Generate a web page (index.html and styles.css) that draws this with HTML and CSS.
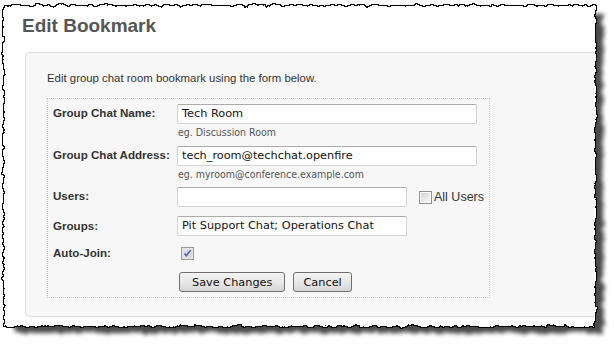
FILE: index.html
```html
<!DOCTYPE html>
<html lang="en">
<head>
    <meta charset="UTF-8">
    <title>Edit Bookmark</title>
    <link rel="stylesheet" href="styles.css">
</head>
<body>
    <div class="sheet">
        <!-- torn paper edge and drop shadow behind the page -->
        <svg class="paper" width="614" height="349" viewBox="0 0 614 349">
            <defs>
                <filter id="torn" x="-3%" y="-3%" width="106%" height="106%" color-interpolation-filters="sRGB">
                    <feTurbulence type="fractalNoise" baseFrequency="0.14" numOctaves="3" seed="7" result="noise"/>
                    <feDisplacementMap in="SourceGraphic" in2="noise" scale="6" xChannelSelector="R" yChannelSelector="G" result="paper"/>
                    <feMorphology in="paper" operator="dilate" radius="1" result="thick"/>
                    <feFlood flood-color="#000"/>
                    <feComposite in2="thick" operator="in" result="edge"/>
                    <feMerge>
                        <feMergeNode in="edge"/>
                        <feMergeNode in="paper"/>
                    </feMerge>
                </filter>
                <filter id="shadow" x="-5%" y="-5%" width="110%" height="110%" color-interpolation-filters="sRGB">
                    <feTurbulence type="fractalNoise" baseFrequency="0.14" numOctaves="3" seed="7" result="noise"/>
                    <feDisplacementMap in="SourceGraphic" in2="noise" scale="6" xChannelSelector="R" yChannelSelector="G"/>
                    <feGaussianBlur stdDeviation="2.2"/>
                </filter>
            </defs>
            <rect x="14" y="14" width="589" height="319" fill="#4a4a4a" filter="url(#shadow)"/>
            <rect x="4" y="6" width="591" height="320" fill="#fff" filter="url(#torn)"/>
        </svg>

        <div class="page">
            <h1>Edit Bookmark</h1>

            <div class="panel">
                <p class="intro">Edit group chat room bookmark using the form below.</p>

                <div class="form-box">
                    <div class="row row-name">
                        <label class="label">Group Chat Name:</label>
                        <div class="field">
                            <div class="input wide">Tech Room</div>
                            <div class="hint">eg. Discussion Room</div>
                        </div>
                    </div>

                    <div class="row row-address">
                        <label class="label">Group Chat Address:</label>
                        <div class="field">
                            <div class="input wide">tech_room@techchat.openfire</div>
                            <div class="hint">eg. myroom@conference.example.com</div>
                        </div>
                    </div>

                    <div class="row row-users">
                        <label class="label">Users:</label>
                        <div class="field inline">
                            <div class="input narrow"></div>
                            <span class="check all-users">
                                <svg width="13" height="13" viewBox="0 0 13 13">
                                    <defs>
                                        <linearGradient id="boxfill" x1="0" y1="0" x2="1" y2="1">
                                            <stop offset="0" stop-color="#d2d2d2"/>
                                            <stop offset="1" stop-color="#fbfbfb"/>
                                        </linearGradient>
                                    </defs>
                                    <rect x="0.5" y="0.5" width="12" height="12" fill="#fff" stroke="#8e8f8f"/>
                                    <rect x="2" y="2" width="9" height="9" fill="url(#boxfill)"/>
                                </svg>
                            </span>
                            <span class="check-label">All Users</span>
                        </div>
                    </div>

                    <div class="row row-groups">
                        <label class="label">Groups:</label>
                        <div class="field">
                            <div class="input narrow">Pit Support Chat; Operations Chat</div>
                        </div>
                    </div>

                    <div class="row row-join">
                        <label class="label">Auto-Join:</label>
                        <div class="field">
                            <span class="check">
                                <svg width="13" height="13" viewBox="0 0 13 13">
                                    <rect x="0.5" y="0.5" width="12" height="12" fill="#e6e6e6" stroke="#9a9a9a"/>
                                    <rect x="2" y="2" width="9" height="9" fill="#dadde3"/>
                                    <path d="M3.5 6.5 L5.3 8.6 L9.6 3.2" fill="none" stroke="#5a6ea6" stroke-width="1.7"/>
                                </svg>
                            </span>
                        </div>
                    </div>

                    <div class="row row-buttons">
                        <div class="field buttons">
                            <button class="btn">Save Changes</button>
                            <button class="btn btn-cancel">Cancel</button>
                        </div>
                    </div>
                </div>
            </div>
        </div>
    </div>
</body>
</html>
```

FILE: styles.css
```css
body {
    margin: 0;
    padding: 0;
    background: #fff;
    font-family: "Liberation Sans", Arial, sans-serif;
    color: #333;
}
.sheet {
    position: relative;
    width: 614px;
    height: 349px;
    overflow: hidden;
}
.paper {
    position: absolute;
    top: 0;
    left: 0;
}
.page {
    position: relative;
    padding: 15px 0 0 22px;
}
h1 {
    margin: 0;
    font-size: 19px;
    line-height: 22px;
    font-weight: bold;
    color: #555;
}
.panel {
    box-sizing: border-box;
    margin: 15px 0 0 3px;
    width: 569px;
    padding: 18px 0 18px 21px;
    background: #f7f7f7;
    border: 1px solid #dcdcdc;
    border-right: none;
    border-radius: 5px 0 0 5px;
}
.intro {
    margin: 0;
    font-size: 11.4px;
    line-height: 14px;
    color: #333;
}
.form-box {
    box-sizing: border-box;
    margin-top: 13px;
    width: 443px;
    padding: 5px;
    border: 1px dotted #c4c4c4;
}
.row {
    display: flex;
}
.label {
    width: 124px;
    flex: none;
    padding-top: 2px;
    font-size: 11.6px;
    line-height: 14px;
    font-weight: bold;
    color: #333;
}
.field {
    flex: 1;
}
.inline {
    display: flex;
    align-items: center;
    white-space: nowrap;
}
.input {
    box-sizing: border-box;
    height: 20px;
    padding: 0 4px;
    background: #fff;
    border: 1px solid #d3d3d3;
    border-top-color: #ababab;
    border-radius: 2px;
    font-family: "DejaVu Sans", Verdana, sans-serif;
    font-size: 11.3px;
    line-height: 18px;
    color: #111;
    white-space: nowrap;
}
.wide {
    width: 300px;
}
.narrow {
    width: 230px;
    flex: none;
}
.hint {
    margin-top: 2px;
    font-family: "DejaVu Sans Condensed", "DejaVu Sans", sans-serif;
    font-size: 10.5px;
    line-height: 13px;
    color: #555;
    padding-left: 1px;
}
.row-address {
    margin-top: 7px;
}
.row-users {
    margin-top: 6px;
}
.row-groups {
    margin-top: 9px;
}
.row-groups .label {
    padding-top: 3px;
}
.row-join {
    margin-top: 8px;
    height: 20px;
}
.row-join .check {
    margin: 3px 0 0 4px;
}
.check {
    display: inline-block;
    flex: none;
    width: 13px;
    height: 13px;
    line-height: 0;
}
.all-users {
    margin-left: 12px;
}
.check-label {
    margin-left: 2px;
    font-size: 12.5px;
    color: #333;
}
.row-buttons {
    margin-top: 8px;
}
.buttons {
    display: flex;
    gap: 8px;
    padding-left: 126px;
}
.btn {
    box-sizing: border-box;
    height: 20px;
    padding: 0 12px;
    border: 1px solid #707070;
    border-radius: 3px;
    background: linear-gradient(#f4f4f4, #e8e8e8 50%, #d6d6d6);
    font-family: "DejaVu Sans", Verdana, sans-serif;
    font-size: 11.3px;
    line-height: 17px;
    color: #111;
}
.btn-cancel {
    padding: 0 9px;
}
```
